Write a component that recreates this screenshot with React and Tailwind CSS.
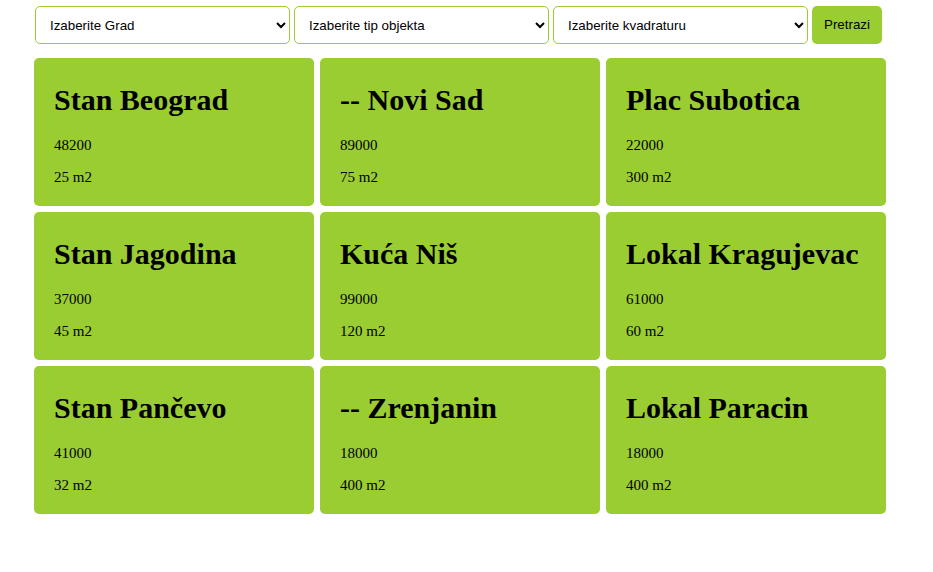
import React from 'react';

const listings = [
  { title: 'Stan Beograd', price: 48200, size: 25 },
  { title: '-- Novi Sad', price: 89000, size: 75 },
  { title: 'Plac Subotica', price: 22000, size: 300 },
  { title: 'Stan Jagodina', price: 37000, size: 45 },
  { title: 'Kuća Niš', price: 99000, size: 120 },
  { title: 'Lokal Kragujevac', price: 61000, size: 60 },
  { title: 'Stan Pančevo', price: 41000, size: 32 },
  { title: '-- Zrenjanin', price: 18000, size: 400 },
  { title: 'Lokal Paracin', price: 18000, size: 400 },
];

function Filter({ label }) {
  return (
    <select className="w-[255px] h-[38px] pl-[10px] pr-[6px] bg-white border border-[#9acd32] rounded-[5px] text-[13.33px] text-black font-['Liberation_Sans',Arial,sans-serif]">
      <option>{label}</option>
    </select>
  );
}

function Card({ item }) {
  return (
    <div className="h-[148px] bg-[#9acd32] rounded-[5px] px-5 pt-[24px] font-['Liberation_Serif','Times_New_Roman',serif] text-black">
      <h1 className="text-[30px] leading-[35px] font-bold mb-[20px] whitespace-nowrap">{item.title}</h1>
      <p className="text-[15px] leading-[17px]">{item.price}</p>
      <p className="text-[15px] leading-[17px] mt-[15px]">{item.size} m2</p>
    </div>
  );
}

export default function App() {
  return (
    <div className="w-[933px] h-[572px] bg-white">
      <div className="flex gap-1 ml-[35px] pt-[6px]">
        <Filter label="Izaberite Grad" />
        <Filter label="Izaberite tip objekta" />
        <Filter label="Izaberite kvadraturu" />
        <button className="w-[70px] h-[38px] bg-[#9acd32] rounded-[5px] text-[13.33px] text-black font-['Liberation_Sans',Arial,sans-serif]">
          Pretrazi
        </button>
      </div>
      <div className="grid grid-cols-[280px_280px_280px] gap-[6px] ml-[34px] mt-[14px]">
        {listings.map((item, i) => (
          <Card key={i} item={item} />
        ))}
      </div>
    </div>
  );
}
